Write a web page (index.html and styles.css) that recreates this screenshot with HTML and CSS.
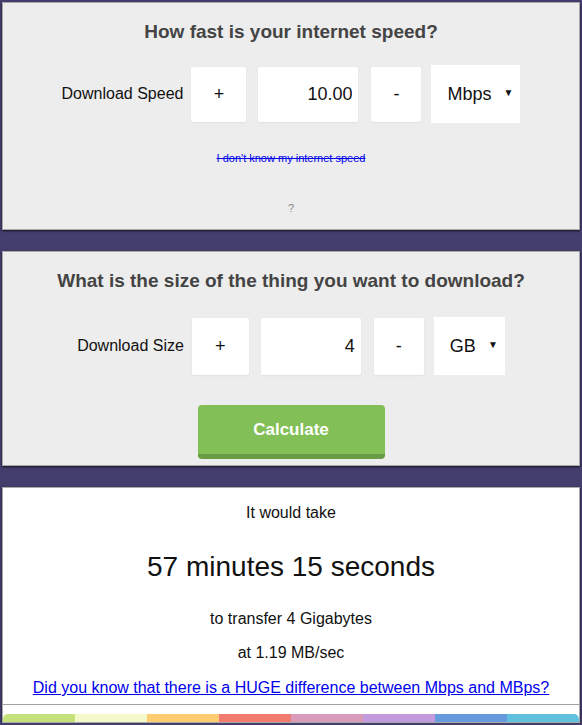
FILE: index.html
```html
<!DOCTYPE html>
<html lang="en">
<head>
    <meta charset="UTF-8">
    <meta name="viewport" content="width=device-width, initial-scale=1.0">
    <title>Download Time Calculator</title>
    <link rel="stylesheet" href="styles.css">
</head>
<body>
    <div class="panel panel-speed">
        <h2>How fast is your internet speed?</h2>
        <div class="field-row">
            <label for="speed">Download Speed</label>
            <button class="step step-plus" type="button">+</button>
            <input class="amount" type="text" id="speed" value="10.00">
            <button class="step step-minus" type="button">-</button>
            <div class="unit">
                <select>
                    <option>Mbps</option>
                    <option>Kbps</option>
                    <option>Gbps</option>
                </select>
                <span class="arrow">&#9660;</span>
            </div>
        </div>
        <p class="unknown"><a href="#">I don't know my internet speed</a></p>
        <p class="help">?</p>
    </div>

    <div class="panel panel-size">
        <h2>What is the size of the thing you want to download?</h2>
        <div class="field-row">
            <label for="size">Download Size</label>
            <button class="step step-plus" type="button">+</button>
            <input class="amount" type="text" id="size" value="4">
            <button class="step step-minus" type="button">-</button>
            <div class="unit">
                <select>
                    <option>GB</option>
                    <option>MB</option>
                    <option>TB</option>
                </select>
                <span class="arrow">&#9660;</span>
            </div>
        </div>
        <button class="calculate" type="button">Calculate</button>
    </div>

    <div class="panel result">
        <p class="result-intro">It would take</p>
        <p class="result-time">57 minutes 15 seconds</p>
        <p class="result-line">to transfer 4 Gigabytes</p>
        <p class="result-line result-rate">at 1.19 MB/sec</p>
        <p class="result-link"><a href="#">Did you know that there is a HUGE difference between Mbps and MBps?</a></p>
        <div class="result-footer">
            <div class="stripes">
                <span class="s1"></span>
                <span class="s2"></span>
                <span class="s3"></span>
                <span class="s4"></span>
                <span class="s5"></span>
                <span class="s6"></span>
                <span class="s7"></span>
                <span class="s8"></span>
            </div>
        </div>
    </div>
</body>
</html>
```

FILE: styles.css
```css
body {
    font-family: "Liberation Sans", Arial, sans-serif;
    margin: 0;
    padding: 2px 2px 0 2px;
    background: #433e6c;
    color: #111;
}
.panel {
    background-color: #ededed;
    border: 1px solid #a9a9a9;
    box-shadow: 0 1px 2px rgba(0, 0, 0, 0.7);
    text-align: center;
    margin-bottom: 21px;
}
h2 {
    font-size: 19px;
    line-height: 24px;
    color: #444;
    margin: 0;
}
.panel-speed {
    padding: 17px 0 14px;
}
.panel-size {
    padding: 17px 0 6px;
}
.field-row {
    display: flex;
    justify-content: center;
    align-items: center;
    margin-top: 21px;
}
.panel-size .field-row {
    margin-top: 24px;
}
label {
    font-size: 16px;
    color: #111;
}
.step, .amount {
    height: 55px;
    border: none;
    border-radius: 2px;
    background: #fff;
    box-shadow: 0 1px 2px rgba(0, 0, 0, 0.06);
    font-family: inherit;
    font-size: 18px;
    color: #111;
    box-sizing: border-box;
}
.step-plus {
    width: 55px;
    margin-left: 8px;
}
.amount {
    width: 100px;
    margin-left: 12px;
    text-align: right;
    padding: 0 6px 0 0;
}
.step-minus {
    width: 50px;
    margin-left: 13px;
}
.panel-size .step-plus {
    width: 57px;
}
.panel-size .step, .panel-size .amount {
    height: 57px;
}
.unit {
    position: relative;
    margin-left: 10px;
}
select {
    -webkit-appearance: none;
    appearance: none;
    height: 58px;
    border: none;
    border-radius: 0;
    background: #fff;
    font-family: inherit;
    font-size: 18px;
    color: #111;
    padding: 0 28px 0 16px;
}
.arrow {
    position: absolute;
    right: 7px;
    top: 22px;
    font-size: 10px;
    color: #111;
    pointer-events: none;
}
.unknown {
    margin: 28px 0 0;
    font-size: 11px;
    line-height: 14px;
}
.unknown a {
    color: #0000ee;
    text-decoration: line-through;
}
.help {
    margin: 36px 0 0;
    font-size: 11px;
    line-height: 14px;
    color: #888;
}
.calculate {
    margin-top: 30px;
    width: 187px;
    height: 54px;
    background-color: #82bf56;
    border: none;
    border-bottom: 5px solid #6a9c46;
    border-radius: 4px;
    color: #fff;
    font-family: inherit;
    font-size: 17px;
    font-weight: bold;
    cursor: pointer;
}
.result {
    background-color: #fff;
    padding-top: 16px;
    margin-bottom: 0;
}
.result p {
    margin: 0;
}
.result-intro {
    font-size: 16px;
    line-height: 18px;
}
.result-time {
    font-size: 28px;
    line-height: 34px;
    margin-top: 28px !important;
}
.result-line {
    font-size: 16px;
    line-height: 18px;
    margin-top: 26px !important;
}
.result-rate {
    margin-top: 16px !important;
}
.result-link {
    font-size: 16px;
    line-height: 18px;
    margin-top: 17px !important;
    padding-bottom: 7px;
    border-bottom: 1px solid #a3a3a3;
}
.result-link a {
    color: #0000ee;
}
.result-footer {
    padding-top: 9px;
}
.stripes {
    display: flex;
    height: 8px;
    border-radius: 5px 5px 0 0;
    overflow: hidden;
}
.stripes span {
    flex: 1;
}
.s1 { background: #c5e17a; }
.s2 { background: #f4f9c9; }
.s3 { background: #ffcc70; }
.s4 { background: #f07b6e; }
.s5 { background: #d99bb9; }
.s6 { background: #c29add; }
.s7 { background: #689ade; }
.s8 { background: #60c1df; }
```
